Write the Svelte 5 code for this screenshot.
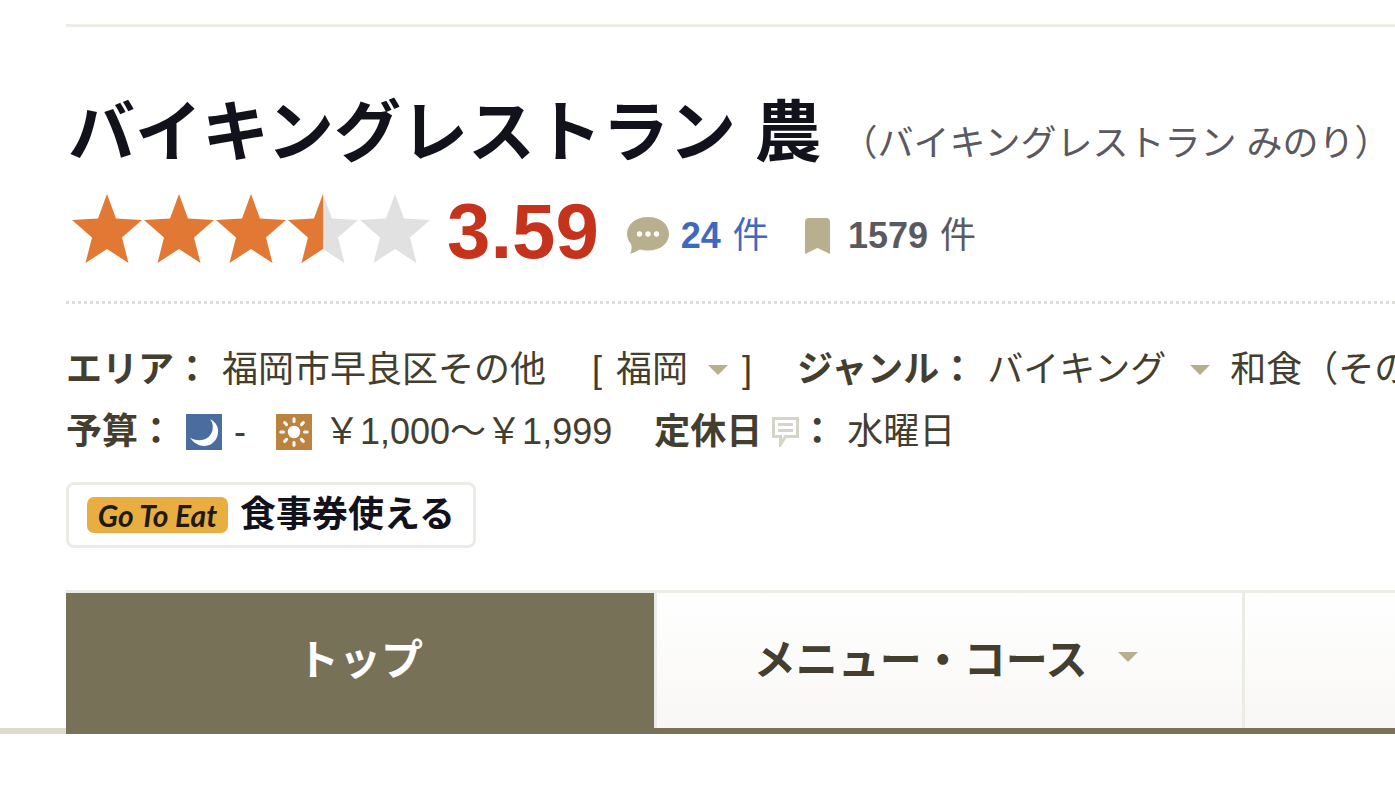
<script>
  const stars = ['full', 'full', 'full', 'half', 'empty'];
  const starShape = '36,1 45,25.5 71,27 51,44.5 57.5,70 36,56 14.5,70 21,44.5 1,27 27,25.5';
  const rays = [0, 45, 90, 135, 180, 225, 270, 315];
</script>

{#snippet caret()}
  <svg class="caret" viewBox="0 0 20 10" aria-hidden="true"><path d="M0 0h20L10 10z" /></svg>
{/snippet}

<div class="page">
  <header>
    <div class="title">
      <h1>バイキングレストラン 農</h1>
      <span class="alias">（バイキングレストラン みのり）</span>
    </div>

    <div class="rating">
      <div class="stars">
        {#each stars as kind}
          <svg viewBox="0 0 72 72" class={kind} aria-hidden="true">
            <polygon class="base" points={starShape} />
            {#if kind === 'half'}
              <polygon class="fill" points="36,1 36,56 14.5,70 21,44.5 1,27 27,25.5" />
            {/if}
          </svg>
        {/each}
      </div>
      <b class="score">3.59</b>
      <a class="reviews" href="#reviews">
        <svg class="bubble" viewBox="0 0 42 38" aria-hidden="true">
          <path d="M21 0C33 0 42 7 42 17S33 33.500 21 33.500C17.500 33.500 15 33 12.500 32.500Q9 35 3 37Q5.500 32 4 27C1.500 24 0 20.500 0 17C0 7 9 0 21 0z" />
          <circle cx="12.500" cy="17" r="2.700" /><circle cx="21" cy="17" r="2.700" /><circle cx="29.500" cy="17" r="2.700" />
        </svg>
        <span class="count"><b>24</b><span>件</span></span>
      </a>
      <span class="saves">
        <svg class="mark" viewBox="0 0 25 36" aria-hidden="true">
          <path d="M4 0h17q4 0 4 4v32l-12.500-6L0 36V4q0-4 4-4z" />
        </svg>
        <span class="count"><b>1579</b><span>件</span></span>
      </span>
    </div>
  </header>

  <dl>
    <div class="row">
      <div class="group">
        <dt>エリア：</dt>
        <dd>
          <a href="#area">福岡市早良区その他</a>
          <span class="pref">[<a href="#pref">福岡</a>{@render caret()}]</span>
        </dd>
      </div>
      <div class="group">
        <dt>ジャンル：</dt>
        <dd class="genres">
          <a href="#buffet">バイキング</a>{@render caret()}<a href="#washoku">和食（その</a>
        </dd>
      </div>
    </div>
    <div class="row">
      <div class="group">
        <dt>予算：</dt>
        <dd class="budget">
          <span class="price">
            <svg class="time" viewBox="0 0 36 36" role="img" aria-label="夜">
              <rect width="36" height="36" fill="#4b6c9f" />
              <path d="M24 5C31 8.500 33.500 15 31.500 21.500C28 34 12 36 4 23.500C9 27 17 27.500 22.500 23C28 18 28 10 24 5z" fill="#fff" />
            </svg>-
          </span>
          <span class="price day">
            <svg class="time" viewBox="0 0 36 36" role="img" aria-label="昼">
              <rect width="36" height="36" fill="#bc8240" />
              <circle cx="18" cy="18" r="6.200" fill="#fff" />
              {#each rays as angle}
                <path d="M18 7.500V4.800" stroke="#fff" stroke-width="3" stroke-linecap="round" transform="rotate({angle} 18 18)" />
              {/each}
            </svg>
            <a href="#budget">￥1,000～￥1,999</a>
          </span>
        </dd>
      </div>
      <div class="group">
        <dt class="holiday">定休日<svg class="note" viewBox="0 0 27 30" aria-hidden="true">
          <path d="M1.500 1.500h24v18h-12l-5 8v-8h-7z" fill="#fff" stroke="#d5d4c8" stroke-width="3" />
          <path d="M6 7.500h15M6 13.500h15" stroke="#d5d4c8" stroke-width="3" />
        </svg>：</dt>
        <dd>水曜日</dd>
      </div>
    </div>
  </dl>

  <a class="ticket" href="#ticket"><span class="goto">Go To Eat</span><b>食事券使える</b></a>

  <nav>
    <a class="tab active" href="#top">トップ</a>
    <a class="tab" href="#menu">メニュー・コース{@render caret()}</a>
    <span class="tab"></span>
  </nav>
</div>

<style>
  :global(body) {
    margin: 0;
    background: #fff;
    overflow-x: hidden;
  }
  .page {
    padding-top: 24px;
    overflow: hidden;
    font-family: "Liberation Sans", "Noto Sans CJK JP", sans-serif;
    font-size: 36px;
    color: #443e2f;
    white-space: nowrap;
  }
  a {
    color: inherit;
    text-decoration: none;
  }
  svg {
    flex: none;
    display: block;
  }
  header {
    margin-left: 66px;
    border-top: 3px solid #ecece6;
    border-bottom: 3px dotted #deded8;
    padding: 58px 0 36px;
  }
  .title {
    display: flex;
    align-items: baseline;
    padding-left: 2px;
  }
  h1 {
    margin: 0;
    font-size: 67px;
    line-height: 96px;
    color: #12121c;
  }
  .alias {
    margin-left: 20px;
    line-height: 48px;
    color: #5a5960;
  }
  .rating {
    display: flex;
    align-items: center;
    height: 72px;
    margin-top: 12px;
    padding-left: 5px;
    line-height: 72px;
    color: #5a5960;
  }
  .stars {
    display: flex;
  }
  .stars svg {
    width: 72px;
    height: 72px;
  }
  .base {
    fill: #e17833;
  }
  .half .base,
  .empty .base {
    fill: #e1e1e1;
  }
  .fill {
    fill: #e17833;
  }
  .score {
    margin-left: 16px;
    padding-top: 4px;
    font-size: 78px;
    color: #c6331d;
  }
  .reviews,
  .saves {
    display: flex;
    align-items: center;
    gap: 12px;
    padding-top: 14px;
  }
  .reviews {
    margin-left: 28px;
    color: #3f69be;
  }
  .saves {
    margin-left: 36px;
    gap: 18px;
  }
  .count {
    display: flex;
    gap: 12px;
  }
  .bubble {
    width: 42px;
    height: 38px;
    fill: #b8af8e;
  }
  .bubble circle {
    fill: #fff;
  }
  .mark {
    width: 25px;
    height: 36px;
    fill: #b8af8e;
  }
  dl {
    margin: 35px 0 19px 66px;
  }
  .row {
    display: flex;
    gap: 42px;
    height: 62px;
    line-height: 62px;
  }
  .group,
  dd,
  .pref,
  .price {
    display: flex;
    align-items: center;
  }
  .group {
    gap: 12px;
  }
  dt {
    font-weight: bold;
  }
  dd {
    margin: 0;
  }
  .caret {
    width: 20px;
    height: 10px;
    margin: 0 20px 0 24px;
    fill: #b8af8e;
  }
  .pref {
    gap: 14px;
    margin: 0 3px 0 46px;
  }
  .pref .caret {
    margin: 0 0 0 6px;
  }
  .price {
    gap: 12px;
  }
  .day {
    margin-left: 30px;
  }
  .time {
    width: 36px;
    height: 36px;
  }
  .holiday {
    display: flex;
    align-items: center;
  }
  .note {
    width: 27px;
    height: 30px;
    margin-left: 10px;
  }
  .ticket {
    display: inline-flex;
    align-items: center;
    gap: 12px;
    margin-left: 66px;
    padding: 0 18px;
    border: 3px solid #ecece6;
    border-radius: 8px;
    line-height: 60px;
    color: #12121c;
  }
  .goto {
    width: 141px;
    border-radius: 7px;
    background: #e9ae42;
    font: italic bold 30px/36px Lato, sans-serif;
    text-align: center;
    color: #1e1a12;
  }
  nav {
    display: flex;
    margin-top: 42px;
    border: solid #777158;
    border-width: 0 0 6px;
    border-image: linear-gradient(to right, #dedbcd 66px, #777158 66px) 0 0 6;
    padding-left: 66px;
  }
  .tab {
    display: flex;
    align-items: center;
    justify-content: center;
    flex: 0 0 44.25%;
    box-sizing: border-box;
    height: 138px;
    padding-bottom: 8px;
    border-top: 3px solid #ecece6;
    background: linear-gradient(#fff, #f8f7f5);
    font-size: 42px;
    font-weight: bold;
  }
  .tab + .tab {
    border-left: 3px solid #ecece6;
    padding-right: 8px;
  }
  .tab.active {
    background: #777158;
    color: #fff;
  }
  .tab .caret {
    margin: 0 0 0 30px;
  }
</style>
